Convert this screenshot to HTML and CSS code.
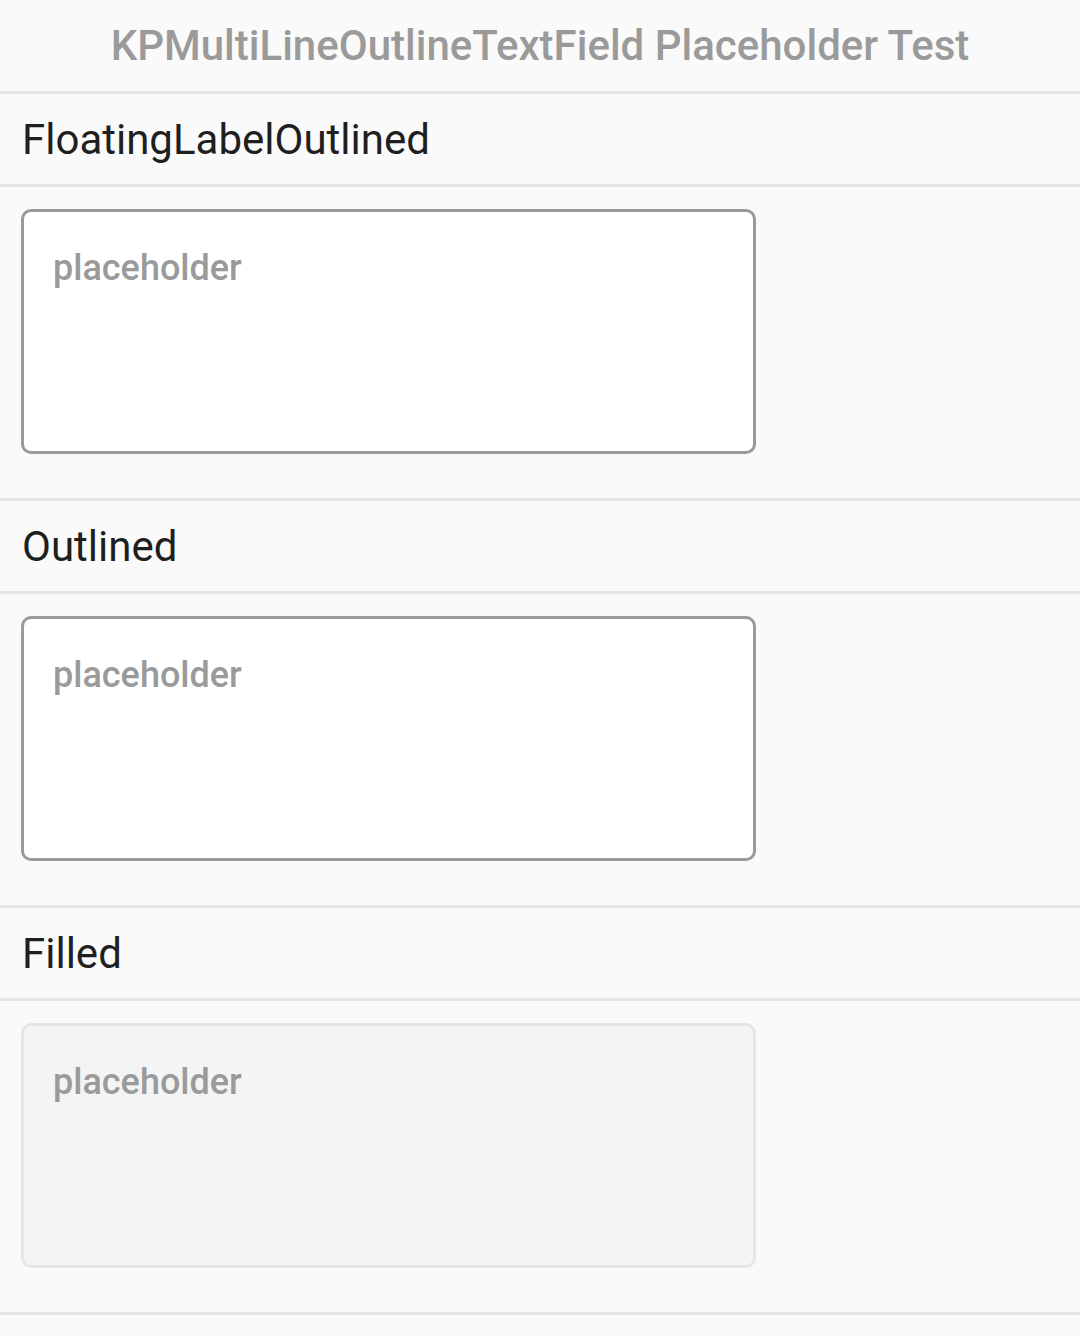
FILE: index.html
```html
<!DOCTYPE html>
<html>
<head>
<meta charset="utf-8">
<link rel="stylesheet" href="styles.css">
</head>
<body>
<div class="page">
  <header class="title-bar">KPMultiLineOutlineTextField Placeholder Test</header>
  <section class="section">
    <div class="label-row">FloatingLabelOutlined</div>
    <div class="content">
      <div class="field field-outlined"><span class="placeholder">placeholder</span></div>
    </div>
  </section>
  <section class="section">
    <div class="label-row">Outlined</div>
    <div class="content">
      <div class="field field-outlined"><span class="placeholder">placeholder</span></div>
    </div>
  </section>
  <section class="section">
    <div class="label-row">Filled</div>
    <div class="content">
      <div class="field field-filled"><span class="placeholder">placeholder</span></div>
    </div>
  </section>
</div>
</body>
</html>
```
FILE: styles.css
```css
html, body {
  margin: 0;
  padding: 0;
  background: #fafafa;
}
.page {
  width: 1080px;
  min-height: 1336px;
  background: #fafafa;
  font-family: Roboto, "Noto Sans", sans-serif;
}
.title-bar {
  height: 91px;
  display: flex;
  align-items: center;
  justify-content: center;
  font-size: 42px;
  font-weight: 500;
  color: #9a9a9a;
  border-bottom: 3px solid #e6e6e6;
  box-sizing: content-box;
}
.label-row {
  height: 90px;
  display: flex;
  align-items: center;
  padding-left: 22px;
  font-size: 42px;
  font-weight: 400;
  color: #1f1f1f;
  border-bottom: 3px solid #e6e6e6;
}
.content {
  padding: 22px 0 44px 21px;
  border-bottom: 3px solid #e6e6e6;
}
.field {
  width: 735px;
  height: 245px;
  box-sizing: border-box;
  border-radius: 10px;
  padding: 34px 0 0 29px;
}
.field-outlined {
  background: #ffffff;
  border: 3px solid #9a9a9a;
}
.field-filled {
  background: #f4f4f4;
  border: 3px solid #e6e6e6;
}
.placeholder {
  font-size: 36px;
  font-weight: 500;
  color: #9a9a9a;
  line-height: 44px;
}
```
